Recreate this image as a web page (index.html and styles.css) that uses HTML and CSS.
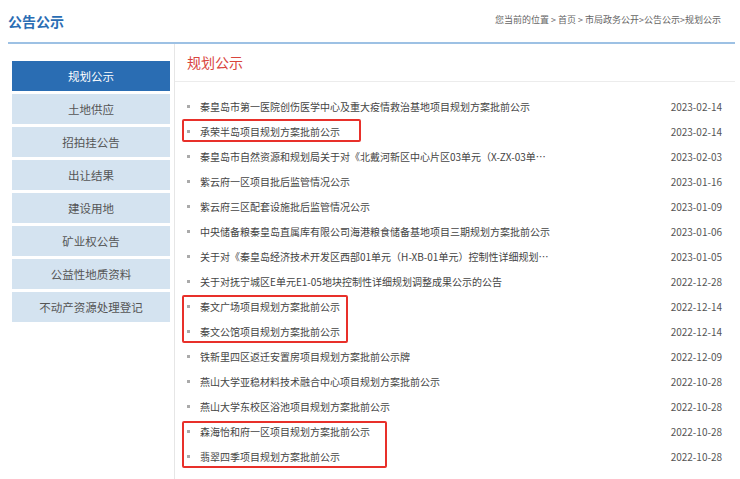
FILE: index.html
```html
<!DOCTYPE html>
<html lang="zh-CN">
<head>
    <meta charset="UTF-8">
    <meta name="viewport" content="width=device-width, initial-scale=1.0">
    <title>公告公示 - 规划公示</title>
    <link rel="stylesheet" href="styles.css">
</head>
<body>
    <div class="page">
        <div class="header">
            <h1>公告公示</h1>
            <div class="crumb">您当前的位置 &gt; 首页 &gt; 市局政务公开&gt;公告公示&gt;规划公示</div>
        </div>

        <div class="main">
            <div class="sidebar">
                <a class="nav-item active" href="#">规划公示</a>
                <a class="nav-item" href="#">土地供应</a>
                <a class="nav-item" href="#">招拍挂公告</a>
                <a class="nav-item" href="#">出让结果</a>
                <a class="nav-item" href="#">建设用地</a>
                <a class="nav-item" href="#">矿业权公告</a>
                <a class="nav-item" href="#">公益性地质资料</a>
                <a class="nav-item" href="#">不动产资源处理登记</a>
            </div>

            <div class="content">
                <h2 class="content-title">规划公示</h2>
                <ul class="news-list">
                    <li><span class="title">秦皇岛市第一医院创伤医学中心及重大疫情救治基地项目规划方案批前公示</span><span class="date">2023-02-14</span></li>
                    <li><span class="title">承荣半岛项目规划方案批前公示</span><span class="date">2023-02-14</span></li>
                    <li><span class="title">秦皇岛市自然资源和规划局关于对《北戴河新区中心片区03单元（X-ZX-03单元）控制性详细规划》的公示</span><span class="date">2023-02-03</span></li>
                    <li><span class="title">紫云府一区项目批后监管情况公示</span><span class="date">2023-01-16</span></li>
                    <li><span class="title">紫云府三区配套设施批后监管情况公示</span><span class="date">2023-01-09</span></li>
                    <li><span class="title">中央储备粮秦皇岛直属库有限公司海港粮食储备基地项目三期规划方案批前公示</span><span class="date">2023-01-06</span></li>
                    <li><span class="title">关于对《秦皇岛经济技术开发区西部01单元（H-XB-01单元）控制性详细规划》的公示</span><span class="date">2023-01-05</span></li>
                    <li><span class="title">关于对抚宁城区E单元E1-05地块控制性详细规划调整成果公示的公告</span><span class="date">2022-12-28</span></li>
                    <li><span class="title">秦文广场项目规划方案批前公示</span><span class="date">2022-12-14</span></li>
                    <li><span class="title">秦文公馆项目规划方案批前公示</span><span class="date">2022-12-14</span></li>
                    <li><span class="title">铁新里四区返迁安置房项目规划方案批前公示牌</span><span class="date">2022-12-09</span></li>
                    <li><span class="title">燕山大学亚稳材料技术融合中心项目规划方案批前公示</span><span class="date">2022-10-28</span></li>
                    <li><span class="title">燕山大学东校区浴池项目规划方案批前公示</span><span class="date">2022-10-28</span></li>
                    <li><span class="title">森海怡和府一区项目规划方案批前公示</span><span class="date">2022-10-28</span></li>
                    <li><span class="title">翡翠四季项目规划方案批前公示</span><span class="date">2022-10-28</span></li>
                </ul>

                <!-- highlight marks drawn over the list -->
                <div class="mark mark-1"></div>
                <div class="mark mark-2"></div>
                <div class="mark mark-3"></div>
            </div>
        </div>
    </div>
</body>
</html>
```

FILE: styles.css
```css
* {
    box-sizing: border-box;
}
body {
    margin: 0;
    background: #fff;
    font-family: "Noto Sans CJK SC", "Noto Sans", sans-serif;
    color: #444;
}
.page {
    padding: 0 5px 0 8px;
}
.header {
    display: flex;
    align-items: center;
    justify-content: space-between;
    height: 44px;
    padding-right: 14px;
    border-bottom: 2px solid #9dc1e4;
}
.header h1 {
    margin: 0;
    font-size: 14px;
    font-weight: bold;
    color: #2a6db4;
    line-height: 16px;
}
.crumb {
    font-size: 9px;
    color: #666;
    margin-top: -3px;
}
.main {
    display: flex;
    min-height: 435px;
}
.sidebar {
    width: 167px;
    padding: 17px 0 0 4px;
    border-right: 1px solid #e6e6e6;
    display: flex;
    flex-direction: column;
    gap: 3px;
}
.nav-item {
    display: block;
    width: 158px;
    height: 30px;
    line-height: 30px;
    text-align: center;
    font-size: 11.5px;
    color: #555;
    background: #d4e3f0;
    text-decoration: none;
}
.nav-item.active {
    background: #2a6db3;
    color: #fff;
}
.content {
    position: relative;
    flex: 1;
}
.content-title {
    margin: 0;
    height: 38px;
    padding: 9px 0 0 12px;
    font-size: 14px;
    font-weight: normal;
    line-height: 18px;
    color: #d9453d;
    border-bottom: 1px solid #ececec;
}
.news-list {
    list-style: none;
    margin: 0;
    padding: 12px 13px 0 12px;
}
.news-list li {
    display: flex;
    align-items: center;
    height: 25px;
    font-size: 10px;
}
.news-list li::before {
    content: "";
    width: 3px;
    height: 3px;
    background: #aaa;
    margin-right: 10px;
    flex-shrink: 0;
}
.news-list .title {
    width: 352px;
    white-space: nowrap;
    overflow: hidden;
    text-overflow: ellipsis;
    color: #444;
}
.news-list .date {
    margin-left: auto;
    color: #555;
}
.mark {
    position: absolute;
    left: 7px;
    border: 2px solid #e8302a;
    border-radius: 2px;
}
.mark-1 {
    top: 75px;
    width: 179px;
    height: 23px;
}
.mark-2 {
    top: 251px;
    width: 166px;
    height: 48px;
}
.mark-3 {
    top: 377px;
    width: 205px;
    height: 47px;
}
```
